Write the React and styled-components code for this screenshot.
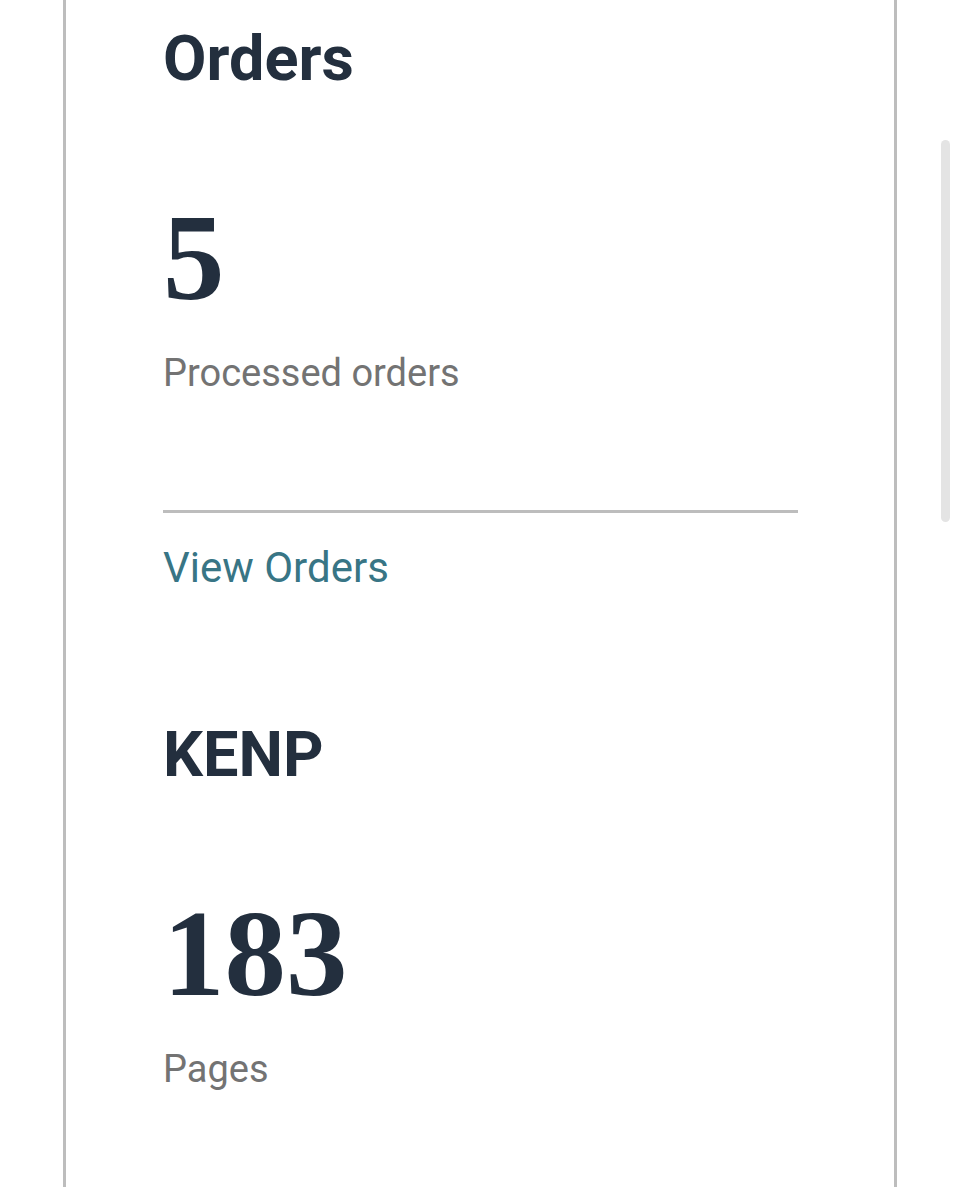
import styled, { createGlobalStyle } from 'styled-components';

const GlobalStyle = createGlobalStyle`
    html, body {
        margin: 0;
        padding: 0;
        background: #FFFFFF;
        overflow: hidden;
    }

    body {
        font-family: Roboto, "Liberation Sans", sans-serif;
        -webkit-font-smoothing: antialiased;
    }
`

export default function App() {
    return (
        <Page>
            <GlobalStyle />
            <Card>
                <Section>
                    <Title>Orders</Title>
                    <Metric>
                        <Value>5</Value>
                        <Caption>Processed orders</Caption>
                    </Metric>
                    <Divider />
                    <Link href="#">View Orders</Link>
                </Section>

                <Section kenp>
                    <Title>KENP</Title>
                    <Metric>
                        <Value>183</Value>
                        <Caption>Pages</Caption>
                    </Metric>
                </Section>
            </Card>
            <ScrollThumb />
        </Page>
    )
}

const Page = styled.div`
    position: relative;
    min-height: 100vh;
    background: #FFFFFF;
`

const Card = styled.div`
    box-sizing: border-box;
    width: 834px;
    min-height: 100vh;
    margin-left: 63px;
    padding: 27px 96px 40px 97px;
    border-left: 3px solid #BDBDBD;
    border-right: 3px solid #BDBDBD;
    background: #FFFFFF;
`

const Section = styled.section`
    display: flex;
    flex-direction: column;
    align-items: flex-start;
    margin-top: ${props => props.kenp ? "134px" : "0"};
`

const Title = styled.h2`
    margin: 0;
    font-family: Roboto, "Liberation Sans", sans-serif;
    font-weight: 700;
    font-size: 63px;
    line-height: 63px;
    color: #232F3E;
`

const Metric = styled.div`
    display: flex;
    flex-direction: column;
    gap: 34px;
    margin-top: 106px;
`

const Value = styled.div`
    font-family: "Liberation Serif", "Times New Roman", serif;
    font-weight: 700;
    font-size: 123px;
    line-height: 124px;
    color: #232F3E;
`

const Caption = styled.div`
    font-family: Roboto, "Liberation Sans", sans-serif;
    font-weight: 400;
    font-size: 38px;
    line-height: 38px;
    color: #737373;
`

const Divider = styled.div`
    align-self: stretch;
    height: 3px;
    margin-top: 118px;
    background: #BDBDBD;
`

const Link = styled.a`
    margin-top: 34px;
    font-family: Roboto, "Liberation Sans", sans-serif;
    font-weight: 400;
    font-size: 42px;
    line-height: 42px;
    color: #387585;
    text-decoration: none;
`

const ScrollThumb = styled.div`
    position: fixed;
    top: 140px;
    left: 941px;
    width: 9px;
    height: 382px;
    border-radius: 5px;
    background: #E4E4E4;
`
